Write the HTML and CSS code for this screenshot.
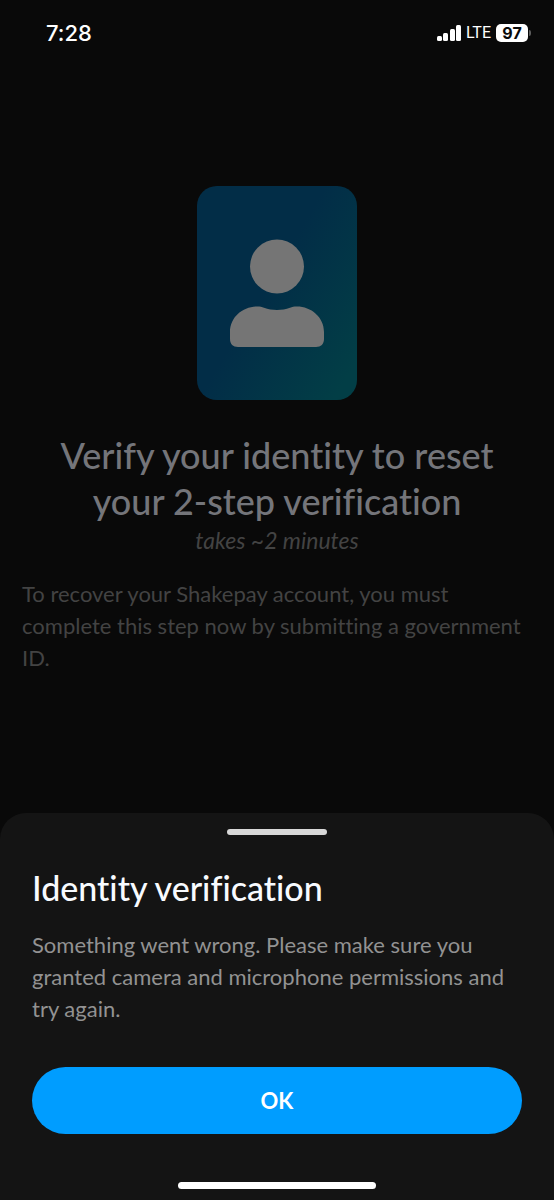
FILE: index.html
```html
<!DOCTYPE html>
<html lang="en">
<head>
<meta charset="utf-8">
<meta name="viewport" content="width=device-width, initial-scale=1">
<title>Identity verification</title>
<link rel="stylesheet" href="styles.css">
</head>
<body class="screen">
  <header class="status">
    <time class="status-time">7:28</time>
    <div class="status-icons">
      <svg class="signal" viewBox="0 0 26 17" aria-hidden="true">
        <rect x="1" y="11" width="5" height="5" rx="1.5"/>
        <rect x="7" y="8" width="5" height="8" rx="1.5"/>
        <rect x="14" y="4" width="5" height="12" rx="1.5"/>
        <rect x="20" y="0" width="5" height="16" rx="1.5"/>
      </svg>
      <span class="network">LTE</span>
      <span class="battery">97</span>
      <span class="battery-tip"></span>
    </div>
  </header>

  <main class="intro">
    <svg class="portrait" viewBox="0 0 160 214" aria-hidden="true">
      <defs>
        <linearGradient id="card" gradientUnits="userSpaceOnUse" x1="75" y1="90" x2="175" y2="150">
          <stop offset="0" stop-color="#022d47"/>
          <stop offset="1" stop-color="#023e46"/>
        </linearGradient>
      </defs>
      <rect width="160" height="214" rx="20" fill="url(#card)"/>
      <g fill="#757575">
        <circle cx="80" cy="80.500" r="27"/>
        <path d="M33 147v-1c0-15 13-25.500 27-25.500c3 0 5 .5 7 1.200c8 3 18 3 26 0c2-.7 4-1.200 7-1.200c14 0 27 10.500 27 25.500v7c0 5-3 8-8 8H41c-5 0-8-3-8-8z"/>
      </g>
    </svg>
    <h1 class="headline">Verify your identity to reset your 2-step verification</h1>
    <p class="duration">takes ~2 minutes</p>
    <p class="details">To recover your Shakepay account, you must complete this step now by submitting a government ID.</p>
  </main>

  <section class="sheet" role="dialog" aria-labelledby="sheet-title">
    <div class="grip"></div>
    <h2 class="sheet-title" id="sheet-title">Identity verification</h2>
    <p class="sheet-text">Something went wrong. Please make sure you granted camera and microphone permissions and try again.</p>
    <button class="confirm" type="button">OK</button>
    <div class="home-bar"></div>
  </section>
</body>
</html>
```
FILE: styles.css
```css
* { box-sizing: border-box; }

.screen {
  display: flex;
  flex-direction: column;
  min-height: 100vh;
  margin: 0;
  background: #090909;
  font-family: Lato, "Open Sans", sans-serif;
  font-size: 22px;
  font-variant-ligatures: none;
  line-height: 32px;
}

.status {
  display: flex;
  justify-content: space-between;
  align-items: center;
  padding: 17px 23px 0 46px;
  color: #fff;
  font-family: Inter, "Liberation Sans", sans-serif;
}

.status-time {
  font-size: 22px;
  font-weight: 500;
}

.status-icons {
  display: flex;
  align-items: center;
}

.signal {
  width: 26px;
  height: 17px;
  fill: #fff;
}

.network {
  margin: 0 5px 0 4px;
  font-family: Roboto, sans-serif;
  font-size: 16px;
}

.battery {
  width: 32px;
  border-radius: 5px;
  background: #fff;
  color: #090909;
  font-size: 16px;
  font-weight: 700;
  line-height: 18px;
  text-align: center;
}

.battery-tip {
  width: 2px;
  height: 6px;
  margin-left: 1px;
  border-radius: 0 2px 2px 0;
  background: #5c5c5c;
}

.intro {
  display: flex;
  flex-direction: column;
  padding: 137px 22px 32px;
  color: #434343;
}

.portrait {
  align-self: center;
  width: 160px;
  height: 214px;
}

.headline {
  margin: 32px 16px 0;
  color: #74757a;
  font-size: 36px;
  font-weight: 500;
  line-height: 46px;
  text-align: center;
}

.duration {
  margin: 0;
  font-size: 23px;
  font-style: italic;
  text-align: center;
}

.details { margin: 22px 0 0; }

.sheet {
  display: flex;
  flex-direction: column;
  margin-top: auto;
  padding: 16px 32px 11px;
  border-radius: 26px 26px 0 0;
  background: #141414;
  color: #929292;
}

.grip,
.home-bar {
  align-self: center;
  border-radius: 4px;
}

.grip {
  width: 100px;
  height: 6px;
  background: #d8d8d8;
}

.sheet-title {
  margin: 32px 0 20px;
  color: #f8fbff;
  font-size: 34px;
  font-weight: 500;
  line-height: 42px;
}

.sheet-text { margin: 0 0 42px; }

.confirm {
  height: 67px;
  border: 0;
  border-radius: 34px;
  background: #009dff;
  color: #fff;
  font: inherit;
  font-weight: 700;
}

.home-bar {
  width: 198px;
  height: 7px;
  margin-top: 48px;
  background: #fff;
}
```
